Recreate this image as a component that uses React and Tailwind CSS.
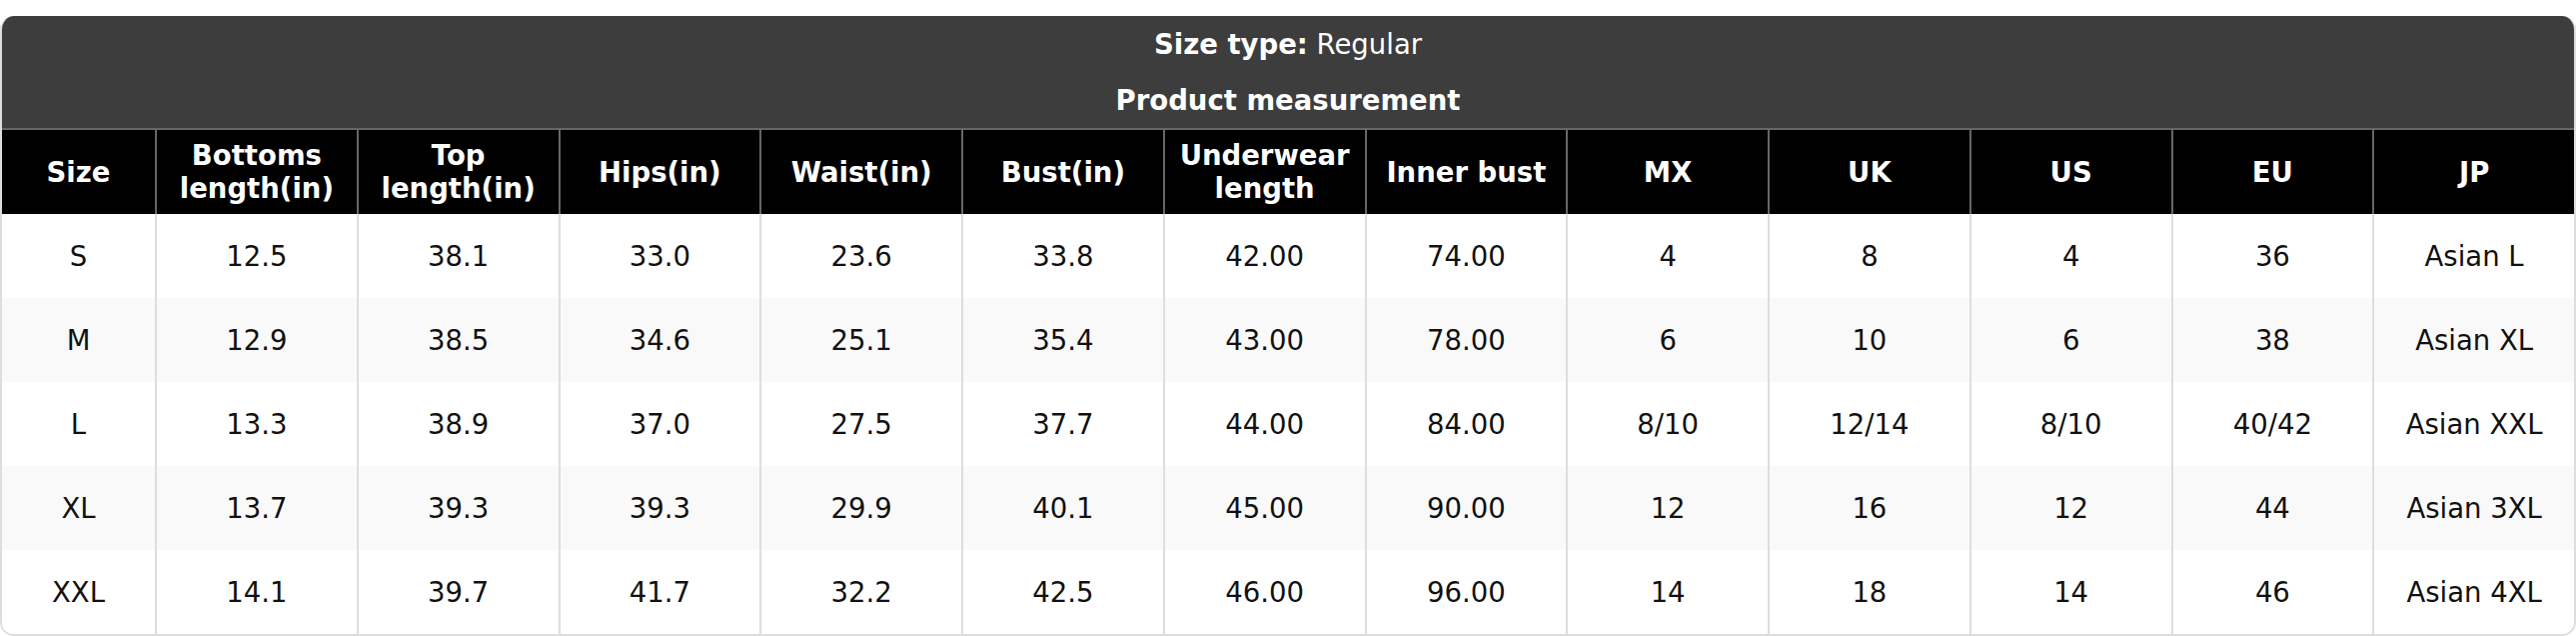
import React from 'react';

const headers = [
  'Size',
  'Bottoms length(in)',
  'Top length(in)',
  'Hips(in)',
  'Waist(in)',
  'Bust(in)',
  'Underwear length',
  'Inner bust',
  'MX',
  'UK',
  'US',
  'EU',
  'JP',
];

const rows = [
  ['S', '12.5', '38.1', '33.0', '23.6', '33.8', '42.00', '74.00', '4', '8', '4', '36', 'Asian L'],
  ['M', '12.9', '38.5', '34.6', '25.1', '35.4', '43.00', '78.00', '6', '10', '6', '38', 'Asian XL'],
  ['L', '13.3', '38.9', '37.0', '27.5', '37.7', '44.00', '84.00', '8/10', '12/14', '8/10', '40/42', 'Asian XXL'],
  ['XL', '13.7', '39.3', '39.3', '29.9', '40.1', '45.00', '90.00', '12', '16', '12', '44', 'Asian 3XL'],
  ['XXL', '14.1', '39.7', '41.7', '32.2', '42.5', '46.00', '96.00', '14', '18', '14', '46', 'Asian 4XL'],
];

const grid = 'grid grid-cols-[153px_repeat(12,minmax(0,1fr))]';

export default function App() {
  return (
    <div className="bg-white pt-[16px] font-['DejaVu_Sans',sans-serif] text-[27.5px] leading-[33px]">
      <div className="overflow-hidden rounded-[14px] border-2 border-t-0 border-[#dddddd] bg-white">
        {/* Title */}
        <div className="flex flex-col bg-[#3d3d3d] text-white">
          <div className="flex h-[56px] items-center justify-center">
            <span className="font-bold">Size type:</span>&nbsp;Regular
          </div>
          <div className="flex h-[56px] items-center justify-center font-bold">Product measurement</div>
        </div>

        {/* Column headers */}
        <div className={`${grid} border-t-2 border-[#666666] bg-black text-white font-bold`}>
          {headers.map((h, i) => (
            <div
              key={h}
              className={`flex h-[84px] items-center justify-center px-[12px] text-center ${
                i > 0 ? 'border-l-2 border-[#666666]' : ''
              }`}
            >
              {h}
            </div>
          ))}
        </div>

        {/* Body */}
        {rows.map((r, ri) => (
          <div
            key={r[0]}
            className={`${grid} text-[#111111] ${ri % 2 === 1 ? 'bg-[#f9f9f9]' : 'bg-white'}`}
          >
            {r.map((c, ci) => (
              <div
                key={ci}
                className={`flex h-[84px] items-center justify-center px-[12px] text-center ${
                  ci > 0 ? 'border-l-2 border-[#dddddd]' : ''
                }`}
              >
                {c}
              </div>
            ))}
          </div>
        ))}
      </div>
    </div>
  );
}
